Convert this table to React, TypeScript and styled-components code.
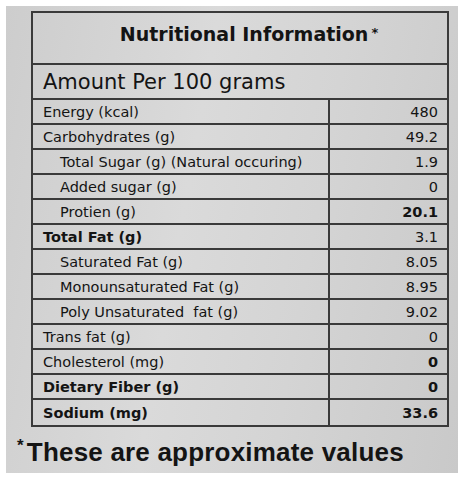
import styled, { createGlobalStyle } from 'styled-components';

const GlobalStyle = createGlobalStyle`
  html, body {
    margin: 0;
    padding: 0;
    background: #ffffff;
  }
  body {
    font-family: 'DejaVu Sans', 'Liberation Sans', sans-serif;
  }
`;

const Photo = styled.section`
  width: 452px;
  height: 467px;
  margin: 6px 0 0 6px;
  background: linear-gradient(100deg, #cdcdcd 0%, #dadada 40%, #d4d4d4 65%, #c9c9c9 100%);
  padding: 5px 0 0 25px;
  box-sizing: border-box;
  display: flex;
  flex-direction: column;
`;

const Table = styled.div`
  width: 418px;
  border: 2px solid #3a3a3a;
  box-sizing: border-box;
  color: #141414;
`;

const Title = styled.h1`
  margin: 0;
  height: 52px;
  box-sizing: border-box;
  display: flex;
  align-items: center;
  justify-content: center;
  font-family: 'DejaVu Sans', sans-serif;
  font-weight: 700;
  font-size: 19px;
  border-bottom: 2px solid #3a3a3a;
  padding: 0 0 8px 18px;

  sup {
    font-size: 13px;
    margin-left: 3px;
    position: relative;
    top: -2px;
  }
`;

const Amount = styled.div`
  height: 33px;
  display: flex;
  align-items: center;
  padding-left: 10px;
  font-size: 21px;
  border-bottom: 2px solid #3a3a3a;
`;

const Row = styled.div<{ $last?: boolean }>`
  display: grid;
  grid-template-columns: 1fr 117px;
  height: 25px;
  border-bottom: ${p => (p.$last ? 'none' : '2px solid #3a3a3a')};
  box-sizing: border-box;
`;

const Label = styled.div<{ $indent?: boolean; $bold?: boolean }>`
  display: flex;
  align-items: center;
  padding-left: ${p => (p.$indent ? '27px' : '10px')};
  font-size: 14.5px;
  font-weight: ${p => (p.$bold ? 700 : 400)};
  border-right: 2px solid #3a3a3a;
  white-space: pre;
`;

const Value = styled.div<{ $bold?: boolean }>`
  display: flex;
  align-items: center;
  justify-content: flex-end;
  padding-right: 9px;
  font-size: 14.5px;
  font-weight: ${p => (p.$bold ? 700 : 400)};
`;

const Footnote = styled.p`
  margin: 9px 0 0 -14px;
  font-family: 'Liberation Sans', Arial, sans-serif;
  font-size: 26px;
  font-weight: 700;
  color: #141414;
  letter-spacing: 0.2px;

  sup {
    font-size: 17px;
    margin-right: 3px;
    position: relative;
    top: 0;
  }
`;

type Nutrient = {
  label: string;
  value: string;
  indent?: boolean;
  boldLabel?: boolean;
  boldValue?: boolean;
};

const nutrients: Nutrient[] = [
  { label: 'Energy (kcal)', value: '480' },
  { label: 'Carbohydrates (g)', value: '49.2' },
  { label: 'Total Sugar (g) (Natural occuring)', value: '1.9', indent: true },
  { label: 'Added sugar (g)', value: '0', indent: true },
  { label: 'Protien (g)', value: '20.1', indent: true, boldValue: true },
  { label: 'Total Fat (g)', value: '3.1', boldLabel: true },
  { label: 'Saturated Fat (g)', value: '8.05', indent: true },
  { label: 'Monounsaturated Fat (g)', value: '8.95', indent: true },
  { label: 'Poly Unsaturated  fat (g)', value: '9.02', indent: true },
  { label: 'Trans fat (g)', value: '0' },
  { label: 'Cholesterol (mg)', value: '0', boldValue: true },
  { label: 'Dietary Fiber (g)', value: '0', boldLabel: true, boldValue: true },
  { label: 'Sodium (mg)', value: '33.6', boldLabel: true, boldValue: true },
];

export default function App() {
  return (
    <>
      <GlobalStyle />
      <Photo>
        <Table>
          <Title>
            Nutritional Information<sup>*</sup>
          </Title>
          <Amount>Amount Per 100 grams</Amount>
          {nutrients.map((n, i) => (
            <Row key={n.label} $last={i === nutrients.length - 1}>
              <Label $indent={n.indent} $bold={n.boldLabel}>
                {n.label}
              </Label>
              <Value $bold={n.boldValue}>{n.value}</Value>
            </Row>
          ))}
        </Table>
        <Footnote>
          <sup>*</sup>These are approximate values
        </Footnote>
      </Photo>
    </>
  );
}
